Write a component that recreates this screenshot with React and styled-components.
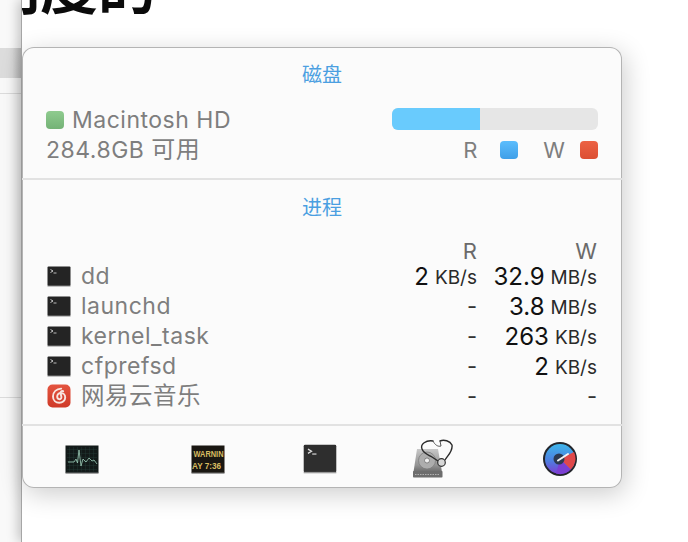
import React from "react";
import styled, { createGlobalStyle } from "styled-components";

const FONT = `Inter, "Noto Sans CJK SC", sans-serif`;

const Global = createGlobalStyle`
  html, body { margin: 0; padding: 0; background: #fff; }
  body { width: 688px; height: 542px; overflow: hidden; font-family: ${FONT}; }
`;

const Page = styled.div`
  display: flex;
  width: 688px;
  height: 542px;
  overflow: hidden;
`;

const Sidebar = styled.aside`
  width: 22px;
  flex: none;
  padding-top: 48px;
  background: #f9f9f9;
  box-sizing: border-box;
`;

const SideBand = styled.div`
  height: 30px;
  background: linear-gradient(90deg, #dcdcdc 0, #dcdcdc 12px, #c6c6c6 22px);
`;

const SideLine = styled.div`
  height: 1px;
  margin-top: ${(p) => p.$gap}px;
  background: #dcdcdc;
`;

const Main = styled.main`
  flex: 1;
  min-width: 0;
  background: #fff;
  border-left: 1px solid #a6a6a6;
  margin-left: -1px;
  box-shadow: -3px 0 11px rgba(0, 0, 0, 0.22);
  position: relative;
  z-index: 1;
`;

const HeadingClip = styled.div`
  height: 47px;
  overflow: hidden;
`;

const Heading = styled.h1`
  margin: -56px 0 0 -40px;
  font: 700 58px/80px "Noto Sans CJK SC", sans-serif;
  color: #0b0b0b;
  white-space: nowrap;
`;

const Popover = styled.section`
  width: 600px;
  height: 441px;
  box-sizing: border-box;
  background: #fbfbfb;
  border-radius: 12px;
  box-shadow: 0 0 0 1px #b4b4b4 inset, 3px 6px 26px rgba(0, 0, 0, 0.2);
  display: flex;
  flex-direction: column;
  overflow: hidden;
`;

const DiskSection = styled.div`
  height: 133px;
  flex: none;
  box-sizing: border-box;
  border-bottom: 2px solid #e2e2e2;
  padding: 0 24px 0 24px;
`;

const Title = styled.h2`
  margin: 0;
  padding-top: ${(p) => p.$top}px;
  text-align: center;
  font: 400 20px/24px "Noto Sans CJK SC", sans-serif;
  color: #4b9fe1;
`;

const DiskBody = styled.div`
  display: flex;
  justify-content: space-between;
  margin-top: 22px;
`;

const DiskInfo = styled.div`
  display: flex;
  flex-direction: column;
  margin-top: -3px;
  font-size: 23px;
  letter-spacing: 0.5px;
  line-height: 30px;
  color: #7e7e7e;
`;

const DiskName = styled.div`
  display: flex;
  align-items: center;
  gap: 8px;
`;

const CjkTail = styled.span`
  font-size: 24px;
  letter-spacing: 0.5px;
`;

const Swatch = styled.span`
  width: 18px;
  height: 18px;
  border-radius: 4px;
  flex: none;
  background: linear-gradient(180deg, ${(p) => p.$from}, ${(p) => p.$to});
`;

const DiskStats = styled.div`
  width: 206px;
`;

const Bar = styled.div`
  height: 22px;
  border-radius: 6px;
  background: #e6e6e6;
  overflow: hidden;
`;

const BarFill = styled.div`
  height: 100%;
  background: #69cbfd;
`;

const Legend = styled.div`
  display: flex;
  justify-content: flex-end;
  align-items: center;
  margin-top: 8px;
  font-size: 22px;
  line-height: 24px;
  color: #7e7e7e;
`;

const LegendLabel = styled.span`
  margin-right: ${(p) => p.$gap}px;
`;

const LegendSwatch = styled(Swatch)`
  margin-right: ${(p) => p.$gap || 0}px;
`;

const ProcessSection = styled.div`
  flex: 1;
  box-sizing: border-box;
  padding: 0 25px 0 25px;
`;

const ProcessGrid = styled.div`
  display: grid;
  grid-template-columns: 1fr 120px 120px;
  grid-template-rows: 20px;
  grid-auto-rows: 30px;
  margin-top: 22px;
`;

const HeadCell = styled.div`
  grid-column: ${(p) => p.$col};
  text-align: right;
  font-size: 22px;
  line-height: 20px;
  color: #6a6a6a;
`;

const HeadRow = styled.div`
  display: contents;
`;

const NameCell = styled.div`
  display: flex;
  align-items: center;
  gap: 10px;
  font-size: 23px;
  letter-spacing: 0.5px;
  color: #7e7e7e;
`;

const NameText = styled.span`
  font-size: ${(p) => (p.$cjk ? "23.5px" : "inherit")};
  margin-top: ${(p) => (p.$cjk ? "-4px" : "0")};
`;

const ValueCell = styled.div`
  display: flex;
  justify-content: flex-end;
  align-items: center;
  gap: 6px;
  font-size: 24px;
  color: #111;
  white-space: nowrap;
`;

const Unit = styled.span`
  font-size: 19px;
  color: #2a2a2a;
  position: relative;
  top: 1px;
`;

const Dash = styled.span`
  font-size: 22px;
  color: #333;
`;

const IconSlot = styled.span`
  display: flex;
  width: 24px;
  height: 24px;
  flex: none;
  align-items: center;
  justify-content: center;
`;

const Footer = styled.footer`
  height: 64px;
  flex: none;
  box-sizing: border-box;
  border-top: 2px solid #e2e2e2;
  padding-top: 4px;
  display: grid;
  grid-template-columns: 120px 132px 92px 134px 120px;
  align-items: center;
  justify-items: center;
`;

const TerminalIcon = ({ w = 24, h = 21, fill = "#242424" }) => (
  <svg width={w} height={h} viewBox="0 0 24 21">
    <rect x="0.5" y="0.5" width="23" height="19.5" rx="1" fill={fill} />
    <rect x="0.5" y="19.6" width="23" height="1" fill="#9a9a9a" />
    <path d="M3.5 3.5 L6 5 L3.5 6.5" stroke="#ddd" strokeWidth="0.9" fill="none" />
    <path d="M6.5 7 H9.5" stroke="#ccc" strokeWidth="0.9" />
  </svg>
);

const NeteaseIcon = () => (
  <svg width="24" height="24" viewBox="0 0 24 24">
    <defs>
      <linearGradient id="ne" x1="0" y1="0" x2="0" y2="1">
        <stop offset="0" stopColor="#e4543f" />
        <stop offset="1" stopColor="#cf3a28" />
      </linearGradient>
    </defs>
    <rect x="0.5" y="0.5" width="23" height="23" rx="5" fill="url(#ne)" />
    <path
      d="M14.2 4.6 C9.6 5 6 8 6 12.6 C6 16.4 8.8 18.8 12.2 18.8 C15.6 18.8 18.2 16.4 18.2 13.4 C18.2 10.8 16.2 9 14 9 C11.8 9 10.2 10.6 10.2 12.6 C10.2 14.2 11.2 15.2 12.4 15.2 C13.6 15.2 14.5 14.2 14.4 13 L13.6 9.2 C13.3 7.6 14.4 6.6 16.2 7.2"
      fill="none"
      stroke="#f8e6e0"
      strokeWidth="1.9"
      strokeLinecap="round"
    />
  </svg>
);

const ActivityIcon = () => (
  <svg width="34" height="29" viewBox="0 0 34 29">
    <defs>
      <pattern id="gr" width="4" height="4" patternUnits="userSpaceOnUse">
        <path d="M4 0H0V4" fill="none" stroke="#27443e" strokeWidth="0.6" />
      </pattern>
    </defs>
    <rect x="0.5" y="0.5" width="33" height="27.5" fill="#121a19" />
    <rect x="2" y="2" width="30" height="24.5" fill="url(#gr)" />
    <rect x="0.5" y="27.6" width="33" height="1.2" fill="#8c8c8c" />
    <path
      d="M3 17 H9 L11 14 L12.5 18 L14 5 L16 21 L18 14 L21 17 L24 13 L27 16 L29 15 L32 19"
      fill="none"
      stroke="#9fcfba"
      strokeWidth="0.8"
    />
  </svg>
);

const ConsoleText = styled.text`
  font-family: "Liberation Sans", sans-serif;
  font-weight: 700;
  font-size: 9.5px;
  fill: #d8bd62;
`;

const ConsoleIcon = () => (
  <svg width="34" height="29" viewBox="0 0 34 29">
    <rect x="0.5" y="0.5" width="33" height="27.5" fill="#1a1712" />
    <rect x="0.5" y="27.6" width="33" height="1.2" fill="#8c8c8c" />
    <ConsoleText x="2.5" y="12" textLength="30" lengthAdjust="spacingAndGlyphs">WARNIN</ConsoleText>
    <ConsoleText x="1" y="24" textLength="29" lengthAdjust="spacingAndGlyphs">AY 7:36</ConsoleText>
  </svg>
);

const DiskUtilityIcon = () => (
  <svg width="42" height="40" viewBox="0 0 42 40">
    <defs>
      <linearGradient id="hd" x1="0" y1="0" x2="0" y2="1">
        <stop offset="0" stopColor="#c8c8c8" />
        <stop offset="0.7" stopColor="#949494" />
        <stop offset="1" stopColor="#6b6b6b" />
      </linearGradient>
    </defs>
    <path d="M5 10 H26 L30 33 H1.5 Z" fill="url(#hd)" />
    <rect x="1" y="32" width="29.5" height="6.5" rx="0.8" fill="#6d6d6d" />
    <path d="M3 35.5 H28" stroke="#b0b0b0" strokeWidth="1" strokeDasharray="1.5 1" />
    <circle cx="15" cy="21.5" r="8.5" fill="#adadad" stroke="#7a7a7a" strokeWidth="0.7" />
    <circle cx="15" cy="21.5" r="2.5" fill="#efefef" stroke="#666" strokeWidth="0.7" />
    <path
      d="M21 2 C14 1 8 5 10 10 C12 15 17 16 20 18 L26 22"
      fill="none"
      stroke="#2b2b2b"
      strokeWidth="1.4"
      strokeLinecap="round"
    />
    <path
      d="M28 2 C32 0 38 2 40 6 C41 12 36 16 33 21"
      fill="none"
      stroke="#2b2b2b"
      strokeWidth="1.4"
      strokeLinecap="round"
    />
    <path d="M21 2 C23 6 26 8 29 7 M28 2 L29 7" fill="none" stroke="#555" strokeWidth="1" />
    <circle cx="29.5" cy="23.5" r="3.8" fill="#d8d8d8" stroke="#333" strokeWidth="1.2" />
  </svg>
);

const GaugeIcon = () => (
  <svg width="36" height="36" viewBox="0 0 36 36">
    <defs>
      <linearGradient id="g1" x1="0" y1="0" x2="0" y2="1">
        <stop offset="0" stopColor="#3eb6ea" />
        <stop offset="0.55" stopColor="#4d7fe0" />
        <stop offset="1" stopColor="#7b3fd2" />
      </linearGradient>
    </defs>
    <circle cx="18" cy="18" r="17" fill="#23252b" />
    <circle cx="18" cy="18" r="15" fill="url(#g1)" />
    <path d="M18 18 L32 11 A15 15 0 0 1 28.6 28.6 Z" fill="#e0484a" />
    <path d="M18 18 L28.6 28.6 A15 15 0 0 1 14 32.5 Z" fill="#7b3fd2" />
    <circle cx="17" cy="18" r="5.5" fill="#2d3a50" />
    <path d="M16 19.5 L26 13" stroke="#f4f4f4" strokeWidth="2" strokeLinecap="round" />
  </svg>
);

const processes = [
  { name: "dd", r: ["2", "KB/s"], w: ["32.9", "MB/s"] },
  { name: "launchd", r: null, w: ["3.8", "MB/s"] },
  { name: "kernel_task", r: null, w: ["263", "KB/s"] },
  { name: "cfprefsd", r: null, w: ["2", "KB/s"] },
  { name: "网易云音乐", r: null, w: null, netease: true },
];

const Value = ({ data }) => (
  <ValueCell>
    {data ? (
      <>
        {data[0]}
        <Unit>{data[1]}</Unit>
      </>
    ) : (
      <Dash>-</Dash>
    )}
  </ValueCell>
);

export default function App() {
  return (
    <>
      <Global />
      <Page>
        <Sidebar>
          <SideBand />
          <SideLine $gap={15} />
          <SideLine $gap={303} />
        </Sidebar>
        <Main>
          <HeadingClip>
            <Heading>制度的</Heading>
          </HeadingClip>
          <Popover>
            <DiskSection>
              <Title $top={15}>磁盘</Title>
              <DiskBody>
                <DiskInfo>
                  <DiskName>
                    <Swatch $from="#8fcb8f" $to="#74b276" />
                    Macintosh HD
                  </DiskName>
                  <div>
                    284.8GB <CjkTail>可用</CjkTail>
                  </div>
                </DiskInfo>
                <DiskStats>
                  <Bar>
                    <BarFill style={{ width: `${(88 / 206) * 100}%` }} />
                  </Bar>
                  <Legend>
                    <LegendLabel $gap={23}>R</LegendLabel>
                    <LegendSwatch $from="#5bbdfd" $to="#3f9fe8" $gap={25} />
                    <LegendLabel $gap={15}>W</LegendLabel>
                    <LegendSwatch $from="#ec6244" $to="#dc4f33" />
                  </Legend>
                </DiskStats>
              </DiskBody>
            </DiskSection>
            <ProcessSection>
              <Title $top={15}>进程</Title>
              <ProcessGrid>
                <HeadRow>
                  <HeadCell $col={2}>R</HeadCell>
                  <HeadCell $col={3}>W</HeadCell>
                </HeadRow>
                {processes.map((p) => (
                  <React.Fragment key={p.name}>
                    <NameCell>
                      <IconSlot>{p.netease ? <NeteaseIcon /> : <TerminalIcon />}</IconSlot>
                      <NameText $cjk={p.netease}>{p.name}</NameText>
                    </NameCell>
                    <Value data={p.r} />
                    <Value data={p.w} />
                  </React.Fragment>
                ))}
              </ProcessGrid>
            </ProcessSection>
            <Footer>
              <ActivityIcon />
              <ConsoleIcon />
              <TerminalIcon w={34} h={30} fill="#2e2e2e" />
              <DiskUtilityIcon />
              <GaugeIcon />
            </Footer>
          </Popover>
        </Main>
      </Page>
    </>
  );
}
